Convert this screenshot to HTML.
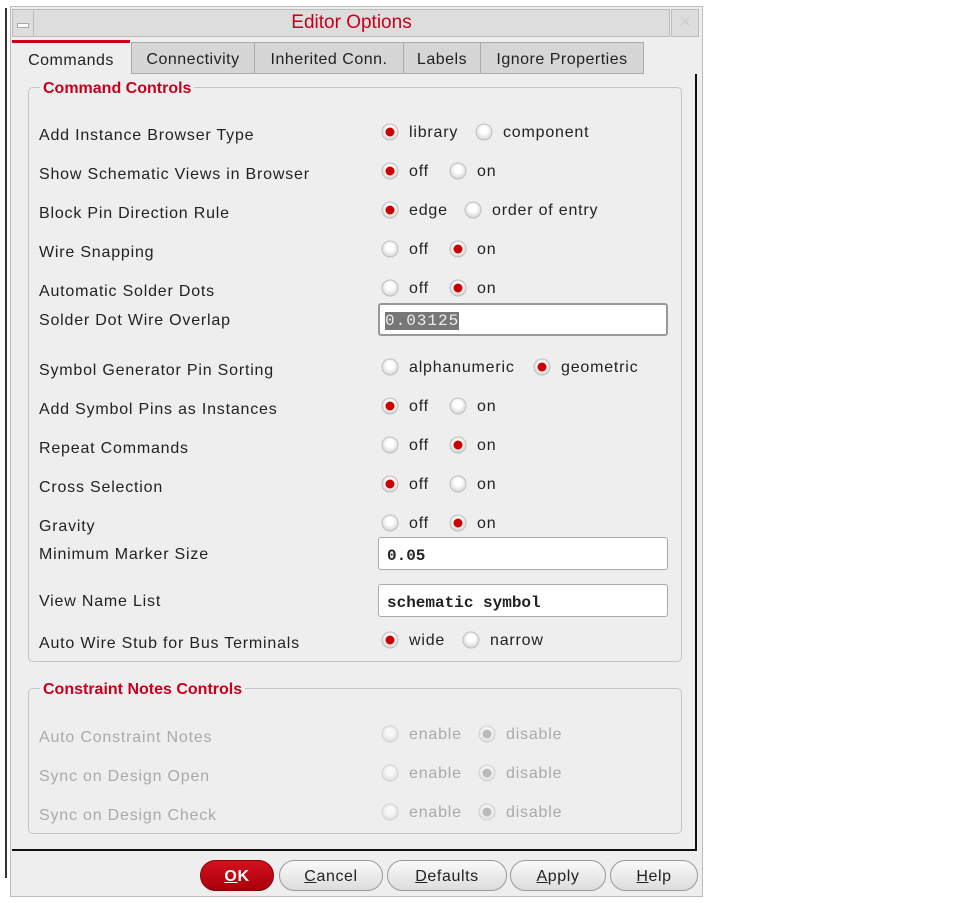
<!DOCTYPE html><html><head><style>
body{margin:0;width:963px;height:903px;background:#fff;font-family:"Liberation Sans","DejaVu Sans",sans-serif;position:relative;overflow:hidden}
.a{position:absolute}
.lbl{position:absolute;left:39px;font-size:16px;color:#222;transform:translateY(-50%);margin-top:2px;letter-spacing:0.8px}
.dis{color:#aaa}
.r{position:absolute;width:15px;height:15px;border-radius:50%;background:radial-gradient(circle at 50% 40%,#fff 30%,#ddd 70%,#bbb);box-shadow:0 0 0 1px #bbb;transform:translate(-50%,-50%)}
.r.on::after{content:"";position:absolute;left:3px;top:3px;width:9px;height:9px;border-radius:50%;background:#c00}
.r.d{opacity:.6}.r.d.on::after{background:#999}
.t{position:absolute;font-size:16px;color:#222;transform:translateY(-50%);margin-top:2px;letter-spacing:0.8px}
.t.dis{color:#aaa}
.inp{position:absolute;left:378px;width:290px;height:33px;background:#fff;border:1px solid #aaa;border-radius:3px;box-sizing:border-box;font-family:"Liberation Mono",monospace;font-size:16px;font-weight:bold;padding:9px 8px;color:#222}
.btn{position:absolute;top:860px;height:31px;border-radius:16px;border:1px solid #999;background:linear-gradient(#fafafa,#ddd);font-size:16px;text-align:center;line-height:31px;box-sizing:border-box;color:#222;letter-spacing:0.6px}
.grp{position:absolute;border:1px solid #c4c4c4;border-radius:5px}
.gt{position:absolute;background:#eee;color:#c8001c;font-weight:bold;font-size:16px;padding:0 3px;top:80px}
</style></head><body>
<div class="a" style="left:5px;top:8px;width:2px;height:870px;background:#333"></div>
<div class="a" style="left:10px;top:6px;width:691px;height:889px;background:#eee;border:1px solid #bbb"></div>
<div class="a" style="left:12px;top:9px;width:20px;height:26px;background:#ddd;border:1px solid #bbb"></div>
<div class="a" style="left:17px;top:23px;width:10px;height:3px;background:#fff;border:1px solid #aaa"></div>
<div class="a" style="left:33px;top:9px;width:635px;height:26px;background:#ddd;border:1px solid #bbb;text-align:center;color:#c8001c;font-size:19px;line-height:26px">Editor Options</div>
<div class="a" style="left:671px;top:9px;width:26px;height:26px;background:#ddd;border:1px solid #bbb;color:#ccc;text-align:center;line-height:26px">✕</div>
<div class="a" style="left:12px;top:40px;width:118px;height:34px;background:#eee;border-top:3px solid #c8001c;font-size:16px;text-align:center;line-height:36px;color:#222;letter-spacing:0.5px">Commands</div>
<div class="a" style="left:131px;top:42px;width:122px;height:30px;background:#d6d6d6;border:1px solid #aaa;font-size:16px;text-align:center;line-height:34px;color:#222;letter-spacing:0.5px">Connectivity</div>
<div class="a" style="left:254px;top:42px;width:148px;height:30px;background:#d6d6d6;border:1px solid #aaa;font-size:16px;text-align:center;line-height:34px;color:#222;letter-spacing:0.5px">Inherited Conn.</div>
<div class="a" style="left:403px;top:42px;width:76px;height:30px;background:#d6d6d6;border:1px solid #aaa;font-size:16px;text-align:center;line-height:34px;color:#222;letter-spacing:0.5px">Labels</div>
<div class="a" style="left:480px;top:42px;width:162px;height:30px;background:#d6d6d6;border:1px solid #aaa;font-size:16px;text-align:center;line-height:34px;color:#222;letter-spacing:0.5px">Ignore Properties</div>
<div class="a" style="left:12px;top:74px;width:683px;height:775px;border-right:2px solid #111;border-bottom:2px solid #111"></div>
<div class="grp" style="left:28px;top:87px;width:652px;height:573px"></div>
<div class="gt" style="left:40px">Command Controls</div>
<div class="grp" style="left:28px;top:688px;width:652px;height:144px"></div>
<div class="gt" style="left:40px;top:681px">Constraint Notes Controls</div>

<div class="lbl" style="top:134px">Add Instance Browser Type</div>
<div class="r on" style="left:390px;top:132px"></div><div class="t" style="left:409px;top:131px">library</div>
<div class="r" style="left:484px;top:132px"></div><div class="t" style="left:503px;top:131px">component</div>

<div class="lbl" style="top:173px">Show Schematic Views in Browser</div>
<div class="r on" style="left:390px;top:171px"></div><div class="t" style="left:409px;top:170px">off</div>
<div class="r" style="left:458px;top:171px"></div><div class="t" style="left:477px;top:170px">on</div>

<div class="lbl" style="top:212px">Block Pin Direction Rule</div>
<div class="r on" style="left:390px;top:210px"></div><div class="t" style="left:409px;top:209px">edge</div>
<div class="r" style="left:473px;top:210px"></div><div class="t" style="left:492px;top:209px">order of entry</div>

<div class="lbl" style="top:251px">Wire Snapping</div>
<div class="r" style="left:390px;top:249px"></div><div class="t" style="left:409px;top:248px">off</div>
<div class="r on" style="left:458px;top:249px"></div><div class="t" style="left:477px;top:248px">on</div>

<div class="lbl" style="top:290px">Automatic Solder Dots</div>
<div class="r" style="left:390px;top:288px"></div><div class="t" style="left:409px;top:287px">off</div>
<div class="r on" style="left:458px;top:288px"></div><div class="t" style="left:477px;top:287px">on</div>

<div class="lbl" style="top:319px">Solder Dot Wire Overlap</div>
<div class="inp" style="top:303px;border:2px solid #999;padding:7px 5px;font-weight:normal;letter-spacing:1px"><span style="background:#777;color:#eee">0.03125</span></div>

<div class="lbl" style="top:369px">Symbol Generator Pin Sorting</div>
<div class="r" style="left:390px;top:367px"></div><div class="t" style="left:409px;top:366px">alphanumeric</div>
<div class="r on" style="left:542px;top:367px"></div><div class="t" style="left:561px;top:366px">geometric</div>

<div class="lbl" style="top:408px">Add Symbol Pins as Instances</div>
<div class="r on" style="left:390px;top:406px"></div><div class="t" style="left:409px;top:405px">off</div>
<div class="r" style="left:458px;top:406px"></div><div class="t" style="left:477px;top:405px">on</div>

<div class="lbl" style="top:447px">Repeat Commands</div>
<div class="r" style="left:390px;top:445px"></div><div class="t" style="left:409px;top:444px">off</div>
<div class="r on" style="left:458px;top:445px"></div><div class="t" style="left:477px;top:444px">on</div>

<div class="lbl" style="top:486px">Cross Selection</div>
<div class="r on" style="left:390px;top:484px"></div><div class="t" style="left:409px;top:483px">off</div>
<div class="r" style="left:458px;top:484px"></div><div class="t" style="left:477px;top:483px">on</div>

<div class="lbl" style="top:525px">Gravity</div>
<div class="r" style="left:390px;top:523px"></div><div class="t" style="left:409px;top:522px">off</div>
<div class="r on" style="left:458px;top:523px"></div><div class="t" style="left:477px;top:522px">on</div>

<div class="lbl" style="top:553px">Minimum Marker Size</div>
<div class="inp" style="top:537px">0.05</div>

<div class="lbl" style="top:600px">View Name List</div>
<div class="inp" style="top:584px">schematic symbol</div>

<div class="lbl" style="top:642px">Auto Wire Stub for Bus Terminals</div>
<div class="r on" style="left:390px;top:640px"></div><div class="t" style="left:409px;top:639px">wide</div>
<div class="r" style="left:471px;top:640px"></div><div class="t" style="left:490px;top:639px">narrow</div>

<div class="lbl dis" style="top:736px">Auto Constraint Notes</div>
<div class="r d" style="left:390px;top:734px"></div><div class="t dis" style="left:409px;top:733px">enable</div>
<div class="r d on" style="left:487px;top:734px"></div><div class="t dis" style="left:506px;top:733px">disable</div>
<div class="lbl dis" style="top:775px">Sync on Design Open</div>
<div class="r d" style="left:390px;top:773px"></div><div class="t dis" style="left:409px;top:772px">enable</div>
<div class="r d on" style="left:487px;top:773px"></div><div class="t dis" style="left:506px;top:772px">disable</div>
<div class="lbl dis" style="top:814px">Sync on Design Check</div>
<div class="r d" style="left:390px;top:812px"></div><div class="t dis" style="left:409px;top:811px">enable</div>
<div class="r d on" style="left:487px;top:812px"></div><div class="t dis" style="left:506px;top:811px">disable</div>

<div class="btn" style="left:200px;width:74px;background:linear-gradient(#d4101c,#a8000c);border-color:#800;color:#fff;font-weight:bold"><u>O</u>K</div>
<div class="btn" style="left:279px;width:104px"><u>C</u>ancel</div>
<div class="btn" style="left:387px;width:120px"><u>D</u>efaults</div>
<div class="btn" style="left:510px;width:96px"><u>A</u>pply</div>
<div class="btn" style="left:610px;width:88px"><u>H</u>elp</div>
</body></html>
